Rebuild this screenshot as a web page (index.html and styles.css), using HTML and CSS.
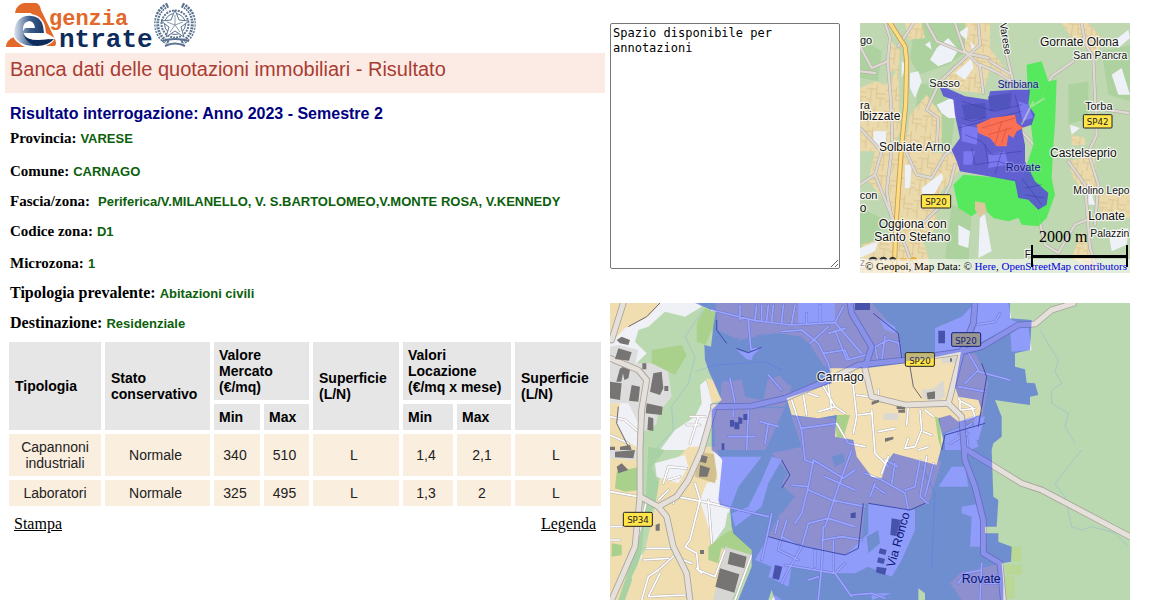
FILE: index.html
```html
<!DOCTYPE html>
<html lang="it">
<head>
<meta charset="utf-8">
<title>Banca dati delle quotazioni immobiliari</title>
<link rel="stylesheet" href="styles.css">
</head>
<body>
<main class="page">
<section class="results">
  <header class="brand">
    <svg class="brand-logo" viewBox="0 0 205 53" role="img" aria-label="Agenzia Entrate">
      <defs>
        <linearGradient id="shine" x1="0" x2="1"><stop offset="0" stop-color="#dfe7f0"/><stop offset=".45" stop-color="#3c5c8c"/><stop offset="1" stop-color="#0d2c5c"/></linearGradient>
      </defs>
      <path d="M11 9Q14 4 19 3H31Q35 4 36 10L50 39Q52 44 50 46H42L26 13H10Z" fill="#e2692a"/>
      <path d="M1 47Q1 40 9 37L13 40Q14 45 20 47Z" fill="#e2692a"/>
      <path d="M8 35Q8 18 22 14Q36 13 40 26L41 33 50 38Q47 47 29 47Q10 46 8 35Z" fill="#fff"/>
      <path d="M9 34Q10 18 21 16Q35 14 38 26L39 33H17L20 28H30Q29 21 24 21Q18 22 18 29Q18 36 24 39Q32 42 45 39Q39 46 28 46Q12 45 9 34Z" fill="url(#shine)"/>
      <path d="M18 34Q21 40 33 40L49 39Q43 46 32 46Q22 44 18 34Z" fill="#0d2c5c"/>
      <text class="logo-top" x="44" y="25">genzia</text>
      <text class="logo-bottom" x="54" y="47">ntrate</text>
      <g fill="none" stroke="#5b7390">
        <circle cx="170" cy="24" r="13.500" stroke-dasharray="2 1" stroke-width="2"/>
        <circle cx="170" cy="24" r="10.500" stroke-width="1"/>
        <path d="M163 5Q150 11 152 27Q153 38 164 43M177 5Q190 11 188 27Q187 38 176 43" stroke-width="5" stroke-dasharray="2 1"/>
        <path d="M161 6Q149 15 151 28Q153 39 166 46M179 6Q191 15 189 28Q187 39 174 46" stroke="#e9eef4"/>
        <path d="M157 41Q170 37 184 41M160 46Q170 41 180 46" stroke-width="2"/>
      </g>
      <path d="M170 10l4 10 10 1-8 6 3 10-9-6-9 6 3-10-8-6 10-1z" fill="#fff" stroke="#5b7390" stroke-width="1"/>
      <path d="M170 15v10l8-3M170 25l5 7M170 25l-5 7M170 25l-8-3" fill="none" stroke="#8b9cb0" stroke-width="1"/>
    </svg>
  </header>
  <h1 class="banner">Banca dati delle quotazioni immobiliari - Risultato</h1>
  <h2 class="query">Risultato interrogazione: Anno 2023 - Semestre 2</h2>
  <dl class="fields">
    <div class="field field-lead"><dt>Provincia:</dt><dd>VARESE</dd></div>
    <div class="field"><dt>Comune:</dt><dd>CARNAGO</dd></div>
    <div class="field field-zone"><dt>Fascia/zona:</dt><dd>Periferica/V.MILANELLO, V. S.BARTOLOMEO,V.MONTE ROSA, V.KENNEDY</dd></div>
    <div class="field field-code"><dt>Codice zona:</dt><dd>D1</dd></div>
    <div class="field"><dt>Microzona:</dt><dd>1</dd></div>
    <div class="field field-use"><dt>Tipologia prevalente:</dt><dd>Abitazioni civili</dd></div>
    <div class="field field-use"><dt>Destinazione:</dt><dd>Residenziale</dd></div>
  </dl>
  <table class="quotes">
    <colgroup><col class="c-type"><col class="c-state"><col class="c-min"><col class="c-max"><col class="c-area"><col class="c-rmin"><col class="c-rmax"><col class="c-area"></colgroup>
    <thead>
      <tr><th rowspan="2">Tipologia</th><th rowspan="2">Stato conservativo</th><th colspan="2">Valore<br>Mercato<br>(€/mq)</th><th rowspan="2">Superficie<br>(L/N)</th><th colspan="2">Valori<br>Locazione<br>(€/mq x mese)</th><th rowspan="2">Superficie<br>(L/N)</th></tr>
      <tr><th>Min</th><th>Max</th><th>Min</th><th>Max</th></tr>
    </thead>
    <tbody>
      <tr><td>Capannoni industriali</td><td>Normale</td><td>340</td><td>510</td><td>L</td><td>1,4</td><td>2,1</td><td>L</td></tr>
      <tr><td>Laboratori</td><td>Normale</td><td>325</td><td>495</td><td>L</td><td>1,3</td><td>2</td><td>L</td></tr>
    </tbody>
  </table>
  <nav class="links"><a href="#stampa">Stampa</a><a href="#legenda">Legenda</a></nav>
</section>

<section class="side">
  <div class="side-top">
    <textarea class="notes" aria-label="Annotazioni">Spazio disponibile per annotazioni</textarea>
    <div class="overview">
      <svg class="map" viewBox="15 15 810 750" role="img" aria-label="Mappa generale">
        <defs>
          <pattern id="blocks" width="58" height="64" patternUnits="userSpaceOnUse" patternTransform="rotate(6)">
            <rect width="58" height="64" fill="#ead9aa"/>
            <path d="M0 14H30V40H58M30 14V0M14 14V64M44 40V64M30 26H58M0 46H14" fill="none" stroke="#d3b988" stroke-width="2"/>
          </pattern>
          <g id="minor-roads">
            <path d="M90 15L105 60 98 130 108 250 112 380 95 520 110 600 150 680 180 765"/>
            <path d="M15 85L50 150 98 130M15 160L60 165M175 15L130 85"/>
            <path d="M215 15L245 70 330 105 400 120M300 15L330 105M370 15L375 80 330 120 255 190 215 275 250 300 245 395"/>
            <path d="M330 100L375 145 385 225M375 140L420 160 470 190"/>
            <path d="M15 330L80 400 60 470 15 500M60 470L100 570 130 640"/>
            <path d="M150 395L185 470 230 480 270 410 310 385M200 620L250 570 285 500 300 440"/>
            <path d="M450 90L475 195M405 130L470 170M680 15L690 75 715 120 725 350 700 405M655 130L590 175 555 250 500 275M725 270L820 285"/>
            <path d="M500 340L545 390M545 570L570 680 610 705 660 620 710 600M640 430L690 500 705 690 730 765M700 405L730 500 720 620"/>
          </g>
        </defs>
        <rect x="15" y="15" width="810" height="750" fill="#bfd8b2"/>
        <g fill="#aed29f">
          <path d="M180 15L370 15 350 90 280 140 190 170 165 120Z"/><path d="M190 200L260 190 300 280 290 380 210 420 175 330Z"/>
          <path d="M15 60L80 100 70 190 15 180ZM640 200L700 190 700 300 640 320ZM740 100L825 80 825 250 760 230ZM15 570L80 600 70 700 15 710Z"/>
          <path d="M170 480L230 520 210 620 160 630ZM290 560L350 580 340 740 270 720Z"/>
        </g>
        <g fill="url(#blocks)">
          <path d="M15 210L60 190 95 200 130 150 135 340 110 400 15 400ZM100 60L135 100 130 160 100 160ZM150 15H200L210 60 160 65Z"/>
          <path d="M330 15H405V150L385 225 320 220 260 200 330 115ZM405 90L470 180 440 185 405 140ZM620 15L700 15 695 90 650 60Z"/>
          <path d="M215 230L260 290 260 370 210 420 180 440 150 380 165 290Z"/>
          <path d="M60 400L140 395 200 400 320 410 310 460 260 520 240 570 250 620 200 680 130 690 100 560 40 490Z"/>
          <path d="M20 680L120 650 210 680 230 765H15ZM640 430L715 410 730 500 690 530 655 480ZM720 530L825 520V600L740 590ZM650 720L680 640 730 765Z"/>
          <path d="M700 15L740 60 730 110 680 85ZM650 350L690 360 690 381 650 381Z"/>
        </g>
        <g fill="#eef1f7">
          <path d="M245 90L280 60 310 95 290 130 250 145 225 125ZM310 45L340 25 335 65ZM165 165L190 160 200 190 180 240 165 210Z"/>
          <path d="M245 260L300 235 305 300 280 300 260 285ZM140 130L155 140 140 180ZM300 165L350 120 355 150 330 185Z"/>
          <path d="M770 75L820 35 825 60 790 90ZM770 170L800 150 825 230 790 230ZM645 320L675 330 650 350Z"/>
          <path d="M200 510L260 465 265 480 240 525 205 550ZM150 440L170 440 165 510 150 510ZM55 340L95 340 90 390 55 380Z"/>
          <path d="M375 585L390 590 410 700 370 720ZM310 620L345 640 340 690 310 680ZM700 490L720 560 700 560ZM760 640L820 630 815 680 770 700ZM15 690L70 670 60 700 15 720Z"/>
          <path d="M230 95L210 80 225 70ZM345 70L365 90 355 110Z"/>
        </g>
        <use href="#minor-roads" class="o-road-edge"/><use href="#minor-roads" class="o-road"/>
        <path d="M105 15L150 85 155 130 152 260 140 381 130 520 122 640 118 765" class="o-main-edge"/>
        <path d="M105 15L150 85 155 130 152 260 140 381 130 520 122 640 118 765" class="o-main"/>
        <path d="M515 140L560 130 580 190 605 185 600 320 595 380 590 480 600 530 575 600 550 625 500 620 490 600 460 610 415 600 385 570 350 595 310 570 295 500 325 470 450 480 500 490 535 380 520 260Z" fill="#42ec4c" fill-opacity=".83"/>
        <path d="M360 550L390 555 395 580 375 600 360 575Z" fill="#dcc79d"/>
        <path d="M255 210L275 210 330 235 400 245 405 220 480 215 525 215 520 260 540 290 530 320 500 330 510 381 510 430 540 490 580 525 575 560 550 575 520 545 490 540 480 490 400 475 315 460 305 430 290 395 315 360 300 290 295 245 265 235Z" fill="#5a55d2" fill-opacity=".92"/>
        <path d="M320 320L370 330 365 380 320 370ZM400 410L450 400 460 440 400 450ZM490 250L520 260 535 300 500 310ZM325 400L360 400 350 440 325 440Z" fill="#7c79f0"/>
        <path d="M320 260L390 255 395 300 330 305ZM400 235L470 225 465 270 405 280Z" fill="#5154bd"/>
        <g fill="none" stroke="#34389e" stroke-opacity=".45" stroke-width="3">
          <path d="M320 300L350 310 390 300M330 350L380 370 410 410 500 400M350 390L360 440 430 430 490 450M480 230L505 320M310 330L500 280M320 250L420 280 500 260M390 380L400 440M420 470L440 400M500 480L560 560M510 510L560 500M510 530L570 540"/>
        </g>
        <path d="M365 320L410 300 480 290 485 315 505 330 485 340 475 360 460 350 455 385 425 385 405 360 370 345Z" fill="#fb7055"/>
        <path d="M380 330L480 300M400 350L470 330M420 380L440 310M440 375L455 330" fill="none" stroke="#dd5a45" stroke-width="3"/>
        <path d="M535 250L500 320M570 240L530 265" stroke="#dce6c2" stroke-opacity=".5" stroke-width="6"/>
        <g class="place">
          <text x="223" y="206" class="s10">Sasso</text><text x="15" y="77" class="s10">go</text>
          <text x="15" y="272" class="s10">ra</text><text x="14" y="306" class="s11">lbizzate</text><text x="72" y="400" class="s11">Solbiate Arno</text>
          <text x="555" y="84" class="s11">Gornate Olona</text><text x="655" y="123" class="s9">San Pancra</text>
          <text x="428" y="211" class="s9 tinted">Stribiana</text><text x="690" y="275" class="s10">Torba</text>
          <text x="585" y="416" class="s11">Castelseprio</text><text x="452" y="458" class="s10 tinted">Rovate</text>
          <text x="655" y="529" class="s9">Molino Lepo</text><text x="700" y="607" class="s11">Lonate</text><text x="706" y="658" class="s9">Palazzin</text>
          <text x="14" y="542" class="s10">con</text><text x="14" y="583" class="s11">o</text><text x="71" y="629" class="s11">Oggiona con</text><text x="58" y="670" class="s11">Santo Stefano</text>
          <text x="509" y="721" class="s9">F</text><text x="15" y="743" class="s9">z</text>
          <text x="434" y="16" class="s9" transform="rotate(81 434 16)">Varese</text>
        </g>
        <path d="M42 726Q55 714 66 726M75 726Q85 714 95 726M104 726Q114 714 122 726" fill="none" stroke="#333" stroke-width="7"/>
        <path d="M134 725H156M164 728Q175 716 184 725" fill="none" stroke="#e7ae35" stroke-width="8"/>
        <g class="plate"><rect x="685" y="290" width="86" height="40" rx="3"/><text x="728" y="321">SP42</text><rect x="199" y="530" width="88" height="40" rx="3"/><text x="243" y="561">SP20</text></g>
      </svg>
      <p class="credits">© Geopoi, Map Data: © <a href="#here">Here</a>, <a href="#osm">OpenStreetMap contributors</a></p>
      <div class="scale"><span>2000 m</span><i></i></div>
    </div>
  </div>

  <svg class="map" viewBox="15 9 1560 891" role="img" aria-label="Mappa della zona D1, Carnago">
    <defs>
      <g id="streets">
        <path d="M320 30L450 62 560 75 690 68 715 20M690 68L770 160M430 62L438 150 455 145M405 15V60M455 15L450 60M470 15V62M490 15L485 62M505 15L500 65M535 15L530 68M570 15L560 72M645 15V65M605 40V70M670 80L615 130"/>
        <path d="M530 95L590 90 640 130 670 190 675 210M690 90L725 180 800 160M720 85L670 100M655 160L720 150 730 175M490 225L530 270M375 235L390 310"/>
        <path d="M560 300L590 390 600 480 625 490M585 385L695 370 730 430 780 440M430 330L425 450M385 320V350M370 410H450M465 365L520 380M480 430L490 370M595 285L605 345M650 250L690 320 720 340M640 290L610 280M690 320L640 335M740 220L755 350 745 400M755 285L790 290M760 345L800 340M665 220L680 330"/>
        <path d="M800 330L810 460 850 500M820 395L870 385M820 270V290M910 320L905 375M945 330L950 390 930 440 900 445 910 415M960 330L985 350M955 395L980 405M970 440L940 450M830 520L850 470"/>
        <path d="M1065 350V300L1060 295M1070 305L1100 320 1110 350 1070 365M1110 325L1070 330M1060 400L1100 370M1080 370L1090 450M1035 430L1090 400"/>
        <path d="M820 190L810 140 850 120 885 130M840 110L830 185M880 130L890 180M1110 70L1085 150 1120 210 1080 250M1120 215L1215 240M1060 260L1140 275M1110 75L1170 65 1185 40"/>
        <path d="M625 480L610 560 590 640 570 670M625 480L715 535 750 510M610 570L680 600 780 620M560 555L610 560M660 530L750 570M740 450L700 560 670 650 660 680M610 670L670 655 750 680M500 640L490 690 470 780M520 660L510 700M545 660L530 710M610 670L590 740 550 810 530 850M590 740L530 710 520 750 580 780M655 680L650 800 640 900M685 720V820M650 720L710 710 770 720M630 750V800"/>
        <path d="M490 650L320 610 215 590M540 795L690 820 740 890M740 885L800 880 840 895M610 840L640 830M690 820L720 790"/>
        <path d="M780 520L830 540 900 580 910 630M870 490L860 550M945 480L930 560 900 570M965 470L945 590 970 610M985 490L960 590M810 550L795 590M810 560L840 580M840 480L880 500M1130 790L1125 900M1060 850L1080 820 1130 810M1180 790L1190 870M1140 850H1180"/>
        <path d="M255 350H300M245 375H285M280 350L255 430M15 350L60 360 100 395M15 405L70 430M175 550L190 500 245 505M190 540L225 530M270 550L285 600 255 720 240 740M310 600L320 730M205 590V610M190 570L160 600M15 575L100 590M240 740L275 760 280 810 330 830 360 750M235 780L260 790M275 805L290 820M125 745H195M115 780L190 775M15 680H50M15 720H45M210 765L160 810 130 830 110 900M165 820L130 890 240 885M440 765L390 900M105 590L125 600 100 710"/>
      </g>
      <g id="main-streets">
        <path d="M15 175L100 210 125 240 110 330 105 450 105 590 160 620 215 590 250 540 290 450 325 330"/>
        <path d="M160 620L185 650 205 740 245 820 255 900M105 590L90 740 20 900M55 9L20 120"/>
        <path d="M325 320L440 318 540 295 670 240 760 195 900 180 1070 155 1130 140 1240 75 1290 72 1340 30 1405 10"/>
        <path d="M1070 155L1030 310 900 315 800 290 780 205 800 140 740 40 735 9"/>
        <path d="M1030 310L1070 350 1080 480 1110 560 1135 660 1135 760 1185 790 1195 900"/>
        <path d="M1085 450L1160 495 1250 550 1310 570 1575 710M1110 9L1105 70 1070 155"/>
      </g>
      <g id="buildings">
        <path d="M35 120l15-10 25 10-5 15-25-5zM40 145l40 12-8 25-42-5zM50 200l25 10-5 25-12 5zM45 205h12l-8 40-15 0zM15 245l35 5-5 50-30-5zM80 255l25 5-5 45-28-3zM145 220l25-5 5 50-10 20-30-10zM178 258h12v15h-12zM125 310l48 10-3 25-48-5zM130 350l15 5v38l-18-3zM112 190h12v18h-12zM45 440l30-5 5 15-35 0zM15 440h15v10H15zM30 455l60-5-5 25-55-3zM35 500l15-10 20 20-30 10zM290 465l18 5-5 20-18-5zM285 495l30 10-8 25-25 0zM152 675l12-5v22h-12zM285 750h12v12h-12z"/>
        <path d="M375 305l50 15-7 35-50-13zM345 355l58 18-15 55-57-18z" transform="translate(0 450)"/>
        <path d="M375 360h12v20h-12zM388 365l15 3v20h-15zM400 350l12 5v16h-12zM415 342h12v18h-12zM750 0h45v30h-45zM1000 92h20v38h-20zM965 278l25-4v22l-22 2zM875 318l25 3v8l-25-2zM880 330h20v8h-20zM800 305l22-6v8l-22 8zM840 415l25-5v8l-25 8zM737 640l15-3v17h-15zM510 795l22 5-10 40-20-5zM860 655l28 5-4 50-28-5zM825 745l20 5-4 15-20-5zM820 772l20 5-4 15-20-5zM815 800l30 5-5 20-27-8zM1035 175h6v10h-6zM350 430h8v20h-8z"/>
      </g>
    </defs>
    <rect x="15" y="9" width="1560" height="891" fill="#bad9b0"/>
    <path d="M15 9H280L290 20 240 50 180 35 130 80 100 90 90 125 125 160 95 190 115 260 110 900H15Z" fill="#f0f0f7"/>
    <path d="M15 9H165L130 50 60 85 15 130Z" fill="#f0deb1"/>
    <path d="M15 190H110L215 190 200 290 160 340 150 395 110 390 70 310 15 310Z" fill="#dedddd"/><path d="M40 135L100 150 90 195 15 175V140Z" fill="#dedddd"/>
    <path d="M190 140L240 135 270 180 250 240 310 240 315 310 270 345 225 385 185 450H125L130 395 175 350 200 290 190 220Z" fill="#b9dab0"/>
    <path d="M285 255L303 240 325 320 305 390 290 450H165L210 390 270 350 290 310Z" fill="#f0f0f7"/>
    <path d="M140 150L230 135 245 165 210 225 140 190ZM275 70L300 25 332 35 318 140 275 125Z" fill="#a9d18c"/>
    <path d="M15 430L60 420 110 450 100 900H15Z" fill="#f0deb1"/><path d="M15 310L45 310 35 370 80 450 15 430Z" fill="#f0deb1"/>
    <path d="M130 440L180 450 140 500 180 590 120 650 110 760 60 900H40L90 750 120 650Z" fill="#a8d2a4"/>
    <path d="M165 530L250 440 330 440 350 480 345 560 350 620 310 620 320 730 360 750 330 900H90L80 830 120 750 150 620Z" fill="#f0deb1"/>
    <path d="M150 490L240 465 250 500 220 550 155 530Z" fill="#f0f0f7"/><path d="M285 600L305 550 350 535 345 615 370 625 360 680 325 730Z" fill="#f0f0f7"/>
    <path d="M280 455L345 465 330 550 270 530Z" fill="#d3c08f"/>
    <path d="M15 450H105V475L75 480 15 475Z" fill="#dedddd"/>
    <path d="M35 515L105 500V570L60 575 30 565ZM20 730L50 735V765L20 770ZM310 740L360 700 380 690 440 750 430 810 350 740 340 790 310 780Z" fill="#a9d18c"/>
    <path d="M360 740L440 765 380 900H325Z" fill="#d6d6d2"/>
    <path d="M305 235L325 240 350 300 320 310Z" fill="#f0deb1"/>
    <path d="M332 9H800L880 100 895 180 700 215 640 190 615 130 510 100 400 120 340 90Z" fill="#ecdbb0"/>
    <path d="M350 240L410 235 420 290 470 300 485 240 530 225 560 260 540 320H345Z" fill="#ecdbb0"/>
    <path d="M325 325H545L520 380 500 450H330Z" fill="#ecdbb0"/>
    <path d="M320 90L365 130 400 110V145L450 145 455 105 520 100 590 110 625 150 655 195 640 225 600 245 550 255 520 225 490 230 475 300 425 290 410 240 350 245 345 295 318 220 305 180 300 140Z" fill="#bad9b0"/>
    <path d="M545 310L580 400 600 450H480L500 410Z" fill="#bad9b0"/>
    <path d="M580 9H690V70L580 75ZM395 150L430 160 470 142 445 165 440 180 425 178ZM820 50L870 80 875 100 840 90ZM990 85L1070 50 1110 9H1210L1220 60 1270 80 1280 150 1220 155 1215 80 1140 120 1080 155 990 155Z" fill="#f0f0f7"/>
    <path d="M560 350L690 355 730 420 790 440 820 530 870 460 1010 485 970 610 915 630 780 610 770 720 720 765 490 710 520 650 560 600 530 550 550 520 500 460 590 440Z" fill="#ecdbb0"/>
    <path d="M1060 165L1110 160 1140 215 1150 250 1130 365 1090 370 1010 400 1000 340 1040 280Z" fill="#ecdbb0"/>
    <path d="M325 450L345 470H470L400 560 370 640 350 620ZM430 620L470 540 500 470 530 480 490 550 470 620 390 680 380 640ZM490 710L720 765 770 720 790 700 790 610 930 630 930 690 890 780 860 830 790 800 750 820 690 820 560 800 550 860 490 830 500 800 450 780Z" fill="#f0f0f7"/>
    <path d="M1020 400L1100 370 1120 440 1070 460V450H1020ZM1110 350H1140L1120 420 1100 420ZM1000 560L1040 500 1080 500 1090 560ZM1070 620L1130 610 1140 740 1095 740 1100 650 1070 640ZM500 900L510 885 530 900ZM860 880H800V900Z" fill="#f0f0f7"/>
    <path d="M1035 850L1070 815 1130 805 1185 790 1190 900H1070Z" fill="#ecdbb0"/>
    <path d="M680 470L715 460 720 485 690 500ZM500 560L530 500 535 560 570 590 530 640 470 640ZM785 710L820 690 825 730 790 760Z" fill="#bad9b0"/>
    <path d="M675 205L780 205 900 190 1068 155 1050 260 1060 290 1120 300 1130 330 1125 345 1060 365 1035 345 1000 355 1015 420 995 495 865 460 845 490 830 535 800 530 755 470 745 420 690 410 695 345 640 355 560 345 545 295 680 250Z" fill="#f2e0b4"/>
    <path d="M690 345L735 345 715 415 695 410ZM990 350L1005 355 1010 450 1000 420Z" fill="#a9d18c"/>
    <path d="M950 270L985 265 1015 240 1020 290 990 310 955 295ZM1010 170H1060V190H1010ZM835 340H880V360H835Z" fill="#dad8d1"/>
    <path d="M1215 740H1250V785H1220ZM1200 795H1250V825H1205ZM1195 830H1230V895H1195Z" fill="#b9d795"/>
    <path d="M1305 90L1335 140 1360 180 1350 215 1370 250 1340 270 1340 310 1390 340 1380 380 1410 430M1430 450L1350 550 1380 590 1400 680 1430 690 1460 680 1500 690 1530 700 1570 740M295 30L240 110 270 170 250 250 200 320 205 390 150 450M270 215L330 195 480 185 530 210M950 500L990 580 980 800" fill="none" stroke="#a5c8c4" stroke-width="3"/>
    <use href="#streets" class="road-edge"/><use href="#streets" class="road"/>
    <use href="#main-streets" class="main-edge"/><use href="#main-streets" class="main"/>
    <use href="#buildings" fill="#777573"/>
    <g fill="none" stroke="#6d6875" stroke-width="3"><path d="M335 60V90L365 130M395 145L430 158 470 142M805 40L880 100 890 175M490 710L600 740 720 765 760 745 775 610M790 610L915 630 960 610M530 480L555 525 530 565M1140 370L1020 405 1010 450M1120 380L1145 230 1130 190M165 9L125 50 70 80M40 320L35 370 70 440M915 200L925 260 950 295"/></g>
    <g class="town town-tinted"><text x="1070" y="850">Rovate</text><text x="868" y="804" transform="rotate(-74 868 804)">Via Ronco</text></g>
    <g class="plate"><rect x="1040" y="98" width="87" height="41" rx="4"/><text x="1083" y="131">SP20</text></g>
    <path fill-rule="evenodd" fill="#001eff" fill-opacity=".4" d="M270 9L332 35 325 80 318 140 298 135 300 180 312 215 350 300 320 330V450L345 470 352 480 340 600 345 615 375 625 380 680 385 700 440 750V800L400 900H490L500 870 510 900H940V865L960 880V900H1195V850L1190 790 1218 785 1220 740 1180 725V700H1140V680H1175L1180 600 1165 590 1160 450 1165 430 1190 410V350L1170 300 1235 310 1275 315V290L1300 285 1290 250 1265 248 1260 208 1230 200V160L1275 150 1280 60 1215 55V9ZM675 205L780 205 900 190 1068 155 1050 260 1060 290 1120 300 1130 330 1125 345 1060 365 1035 345 1000 355 1015 420 995 495 865 460 845 490 830 535 800 530 755 470 745 420 690 410 695 345 640 355 560 345 545 295 680 250Z"/>
    <g class="town"><text x="635" y="243">Carnago</text></g>
    <g class="plate"><rect x="901" y="158" width="87" height="41" rx="4"/><text x="945" y="191">SP20</text><rect x="55" y="637" width="87" height="42" rx="4"/><text x="99" y="669">SP34</text></g>
    <path d="M903 160H985V175L903 184Z" fill="#5064d8" fill-opacity=".35"/>
  </svg>
</section>
</main>
</body>
</html>
```
FILE: styles.css
```css
* { box-sizing: border-box; }
body { margin: 0; background: #fff; color: #000; font-family: "Liberation Serif", serif; }
.page { display: grid; grid-template-columns: 600fr 520fr; gap: 5px; padding: 0 22px 0 5px; }
.results, .side { min-width: 0; }

.brand { height: 53px; }
.brand-logo { display: block; height: 53px; }
.logo-top, .logo-bottom { font-family: "Liberation Mono", monospace; font-weight: bold; }
.logo-top { font-size: 22px; fill: #e2692a; }
.logo-bottom { font-size: 26px; fill: #0d2c5c; }
.banner { margin: 0; padding: 4px 5px 12px; background: #fcebe5; color: #a93c32; font: 20px/24px "Liberation Sans", sans-serif; }
.query { margin: 11px 5px 0; color: #000080; font: bold 16px/19px "Liberation Sans", sans-serif; }

.fields { margin: 0 5px; }
.field { display: flex; align-items: baseline; gap: 4px; line-height: 30px; height: 30px; }
.field dt { font-size: 15px; font-weight: bold; }
.field dd { margin: 0; color: #0b600b; font-family: "Liberation Sans", sans-serif; font-size: 13px; font-weight: bold; }
.field-lead { margin-bottom: 3px; }
.field-zone { gap: 8px; }
.field-code { margin-bottom: 2px; }
.field-use dt { font-size: 16px; }

.quotes { width: 100%; table-layout: fixed; border-spacing: 4px; font: 14px/16px "Liberation Sans", sans-serif; }
.quotes th { padding: 5px; background: #e6e6e6; text-align: left; white-space: nowrap; }
.quotes th[rowspan] { padding: 5px 6px; white-space: normal; }
.quotes td { padding: 5px; background: #faeedf; color: #222; text-align: center; }
.quotes td + td { padding: 5px 8px 5px 4px; }
.c-type { width: 92px; }
.c-state { width: 105px; }
.c-min { width: 46px; }
.c-max { width: 45px; }
.c-area { width: 86px; }
.c-rmin { width: 50px; }
.c-rmax { width: 54px; }
.links { display: flex; justify-content: space-between; padding: 4px 9px; font-size: 16px; line-height: 20px; }
.links a { color: #000; }

.side { display: flex; flex-direction: column; gap: 30px; padding-top: 23px; }
.side-top { display: grid; grid-template-columns: 230fr 270fr; gap: 20px; align-items: start; }
.notes { width: 100%; height: 246px; margin: 0; padding: 2px; border: 1px solid #767676; border-radius: 2px; background: #fff; color: #000; font: 12px/15px "DejaVu Sans Mono", monospace; }
.overview { position: relative; overflow: hidden; }
.map { display: block; width: 100%; height: auto; }
.credits { position: absolute; left: 0; right: 0; bottom: 0; margin: 0; padding: 0 5px; background: rgba(255, 255, 255, .55); font-size: 11px; line-height: 14px; white-space: nowrap; }
.credits a { color: #0000e0; text-decoration: none; }
.scale { position: absolute; right: 2px; bottom: 6px; width: 97px; }
.scale span { display: block; padding-left: 8px; font-size: 16px; line-height: 16px; }
.scale i { display: block; height: 22px; border: solid #000; border-width: 0 2px; background: linear-gradient(#000, #000) center / 100% 3px no-repeat; }

.place, .town { font-family: "Liberation Sans", sans-serif; fill: #111; stroke: #fff; stroke-opacity: .8; stroke-width: 7px; stroke-linejoin: round; paint-order: stroke; }
.town { font-size: 37px; }
.town-tinted { stroke-opacity: .3; }
.s9 { font-size: 31px; }
.s10 { font-size: 33px; }
.s11 { font-size: 36px; }
.tinted { fill: #15157c; stroke: #c6ccff; stroke-opacity: .35; }
.plate rect { fill: #ffe44a; stroke: #222; stroke-width: 3px; }
.plate text { font-family: "DejaVu Sans", sans-serif; font-size: 26px; text-anchor: middle; fill: #222; }

.o-road-edge, .o-road, .o-main-edge, .o-main, .road, .road-edge, .main, .main-edge { fill: none; stroke-linejoin: round; stroke-linecap: round; }
.o-road-edge { stroke: #b0aaa2; stroke-width: 10px; }
.o-road { stroke: #ded9d2; stroke-width: 7px; }
.o-main-edge { stroke: #c79a4c; stroke-width: 15px; }
.o-main { stroke: #fbdc85; stroke-width: 10px; }
.road-edge { stroke: #b5b0ae; stroke-width: 8px; }
.road { stroke: #fff; stroke-width: 5px; }
.main-edge { stroke: #a8a29d; stroke-width: 20px; }
.main { stroke: #e5e0d9; stroke-width: 15px; }
```
